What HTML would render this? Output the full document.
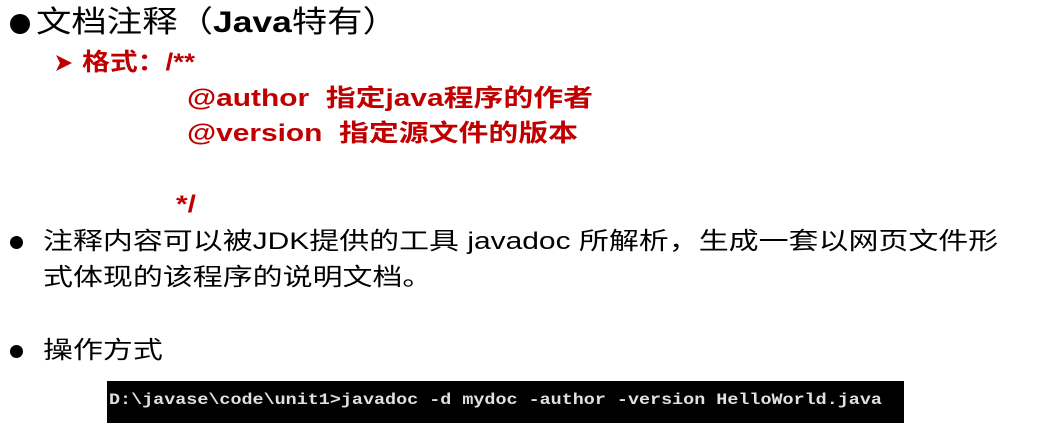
<!DOCTYPE html>
<html><head><meta charset="utf-8"><style>
body{margin:0;width:1037px;height:436px;background:#fff;position:relative;overflow:hidden;font-family:"Liberation Sans","Noto Sans CJK SC",sans-serif;}
.a{position:absolute;white-space:nowrap;line-height:1;transform-origin:0 0;}
.r{color:#c00000;font-weight:bold;font-size:24px;transform:scaleX(1.245);}
.t{font-size:24px;transform:scaleX(1.248);}
.dot{position:absolute;border-radius:50%;background:#000;}
</style></head><body>
<div class="dot" style="left:10px;top:14px;width:20px;height:20px"></div>
<div class="a" style="left:36px;top:8px;font-size:30px;transform:scaleX(1.18)">文档注释（<b>Java</b>特有）</div>
<svg class="a" style="left:55px;top:54px" width="18" height="18" viewBox="0 0 18 18"><path d="M1 1 L17 9 L1 17 L5 9 Z" fill="#c00000"/></svg>
<div class="a r" style="left:82px;top:51px;transform:scaleX(1.16)">格式：/**</div>
<div class="a r" style="left:187px;top:87px;">@author&nbsp; 指定java程序的作者</div>
<div class="a r" style="left:187px;top:122px;">@version&nbsp; 指定源文件的版本</div>
<div class="a r" style="left:176px;top:193px;">*/</div>
<div class="dot" style="left:10px;top:236px;width:13px;height:13px"></div>
<div class="a t" style="left:43px;top:230px;">注释内容可以被JDK提供的工具 javadoc 所解析，生成一套以网页文件形</div>
<div class="a t" style="left:43px;top:266px;">式体现的该程序的说明文档。</div>
<div class="dot" style="left:10px;top:345px;width:13px;height:13px"></div>
<div class="a t" style="left:43px;top:339px;">操作方式</div>
<div style="position:absolute;left:107px;top:381px;width:797px;height:42px;background:#000;"></div>
<div class="a" style="left:109px;top:392px;color:#e0e0e0;font-family:'Liberation Mono',monospace;font-size:16px;font-weight:bold;transform:scaleX(1.15)">D:\javase\code\unit1&gt;javadoc -d mydoc -author -version HelloWorld.java</div>
</body></html>
